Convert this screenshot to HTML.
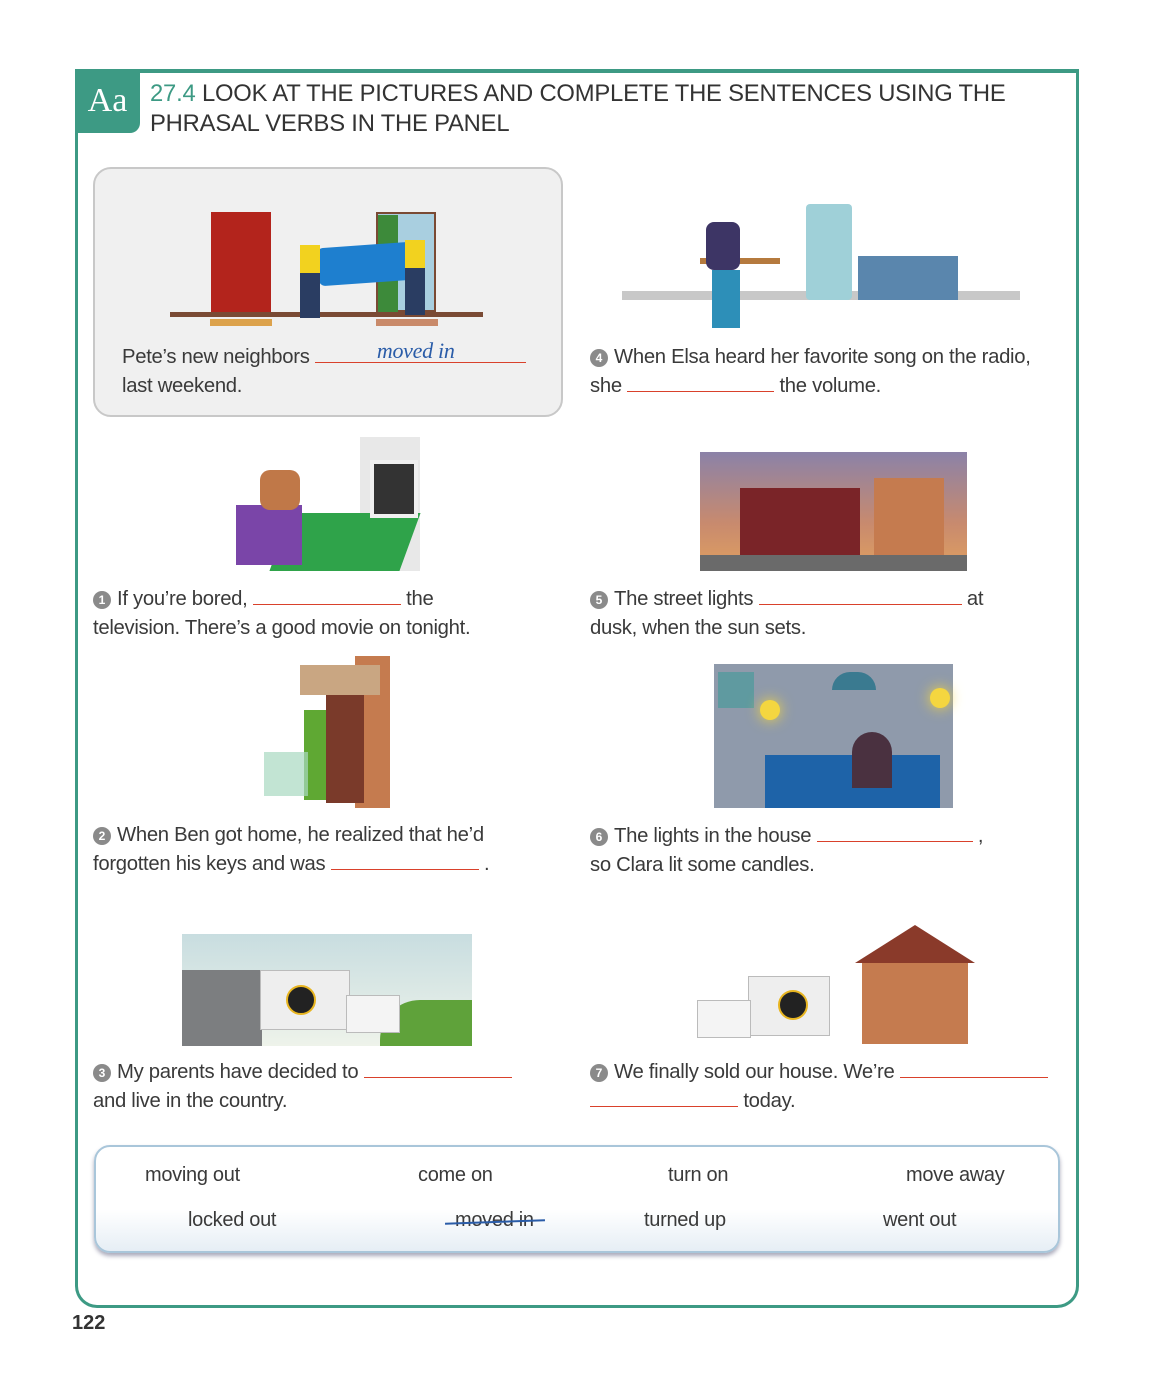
<!DOCTYPE html>
<html><head><meta charset="utf-8"><style>
body{margin:0;width:1152px;height:1376px;background:#fff;position:relative;font-family:"Liberation Sans",sans-serif;color:#333;overflow:hidden}
.a{position:absolute}
.t{position:absolute;font-size:20.3px;line-height:29px;color:#3a3a3a;letter-spacing:-0.3px;white-space:nowrap}
.bl{display:inline-block;border-bottom:1.5px solid #d9412b;height:18px;vertical-align:baseline}
.n{display:inline-block;width:18px;height:18px;border-radius:50%;background:#8a8a8a;color:#fff;font-size:12px;line-height:18px;text-align:center;font-weight:bold;vertical-align:1px;margin-right:6px;letter-spacing:0}
.w{position:absolute;font-size:20px;color:#3a3a3a;letter-spacing:-0.3px}
</style></head><body>
<div class="a" style="left:75px;top:69px;width:998px;height:1232px;border:3px solid #3d9a84;border-top-width:4px;border-radius:0 0 22px 22px"></div>
<div class="a" style="left:75px;top:69px;width:65px;height:64px;background:#3d9a84;border-radius:0 0 10px 0;color:#fff;font-family:'Liberation Serif',serif;font-size:34px;line-height:64px;text-align:center">Aa</div>
<div class="a" style="left:150px;top:79px;font-size:23.8px;line-height:30px;color:#333;letter-spacing:-0.2px;white-space:nowrap"><span style="color:#3d9a84">27.4</span> LOOK AT THE PICTURES AND COMPLETE THE SENTENCES USING THE<br>PHRASAL VERBS IN THE PANEL</div>

<div class="a" style="left:93px;top:167px;width:466px;height:246px;background:#f0f0f0;border:2px solid #c8c8c8;border-radius:18px"></div>
<!-- pic 0 -->
<div class="a" style="left:170px;top:312px;width:313px;height:5px;background:#7a4a34"></div>
<div class="a" style="left:211px;top:212px;width:60px;height:100px;background:#b3241c"></div>
<div class="a" style="left:376px;top:212px;width:60px;height:100px;background:#a9cfe0;border:2px solid #7a4a34;box-sizing:border-box"></div>
<div class="a" style="left:378px;top:215px;width:20px;height:97px;background:#3d8a3a"></div>
<div class="a" style="left:318px;top:245px;width:95px;height:38px;background:#1e7fcf;border-radius:6px;transform:rotate(-4deg)"></div>
<div class="a" style="left:300px;top:250px;width:20px;height:68px;background:#2a3d62"></div>
<div class="a" style="left:300px;top:245px;width:20px;height:28px;background:#f2d21f"></div>
<div class="a" style="left:405px;top:245px;width:20px;height:70px;background:#2a3d62"></div>
<div class="a" style="left:405px;top:240px;width:20px;height:28px;background:#f2d21f"></div>
<div class="a" style="left:210px;top:319px;width:62px;height:7px;background:#dca24c"></div>
<div class="a" style="left:376px;top:319px;width:62px;height:7px;background:#c98a6a"></div>
<div class="t" style="left:122px;top:343px">Pete’s new neighbors <span class="bl" style="width:211px;position:relative"><span style="position:absolute;left:62px;top:-8px;font-family:'Liberation Serif',serif;font-style:italic;color:#2a5ca8;font-size:22px">moved in</span></span><br>last weekend.</div>

<!-- pic 4 -->
<div class="a" style="left:622px;top:291px;width:398px;height:9px;background:#c8c8c8"></div>
<div class="a" style="left:806px;top:204px;width:46px;height:96px;background:#9fd0d8;border-radius:4px"></div>
<div class="a" style="left:858px;top:256px;width:100px;height:44px;background:#5a86ad"></div>
<div class="a" style="left:700px;top:258px;width:80px;height:6px;background:#b57a3e"></div>
<div class="a" style="left:706px;top:222px;width:34px;height:48px;background:#3d3565;border-radius:8px"></div>
<div class="a" style="left:712px;top:270px;width:28px;height:58px;background:#2d8fb8"></div>
<div class="t" style="left:590px;top:343px"><span class="n">4</span>When Elsa heard her favorite song on the radio,<br>she <span class="bl" style="width:147px"></span> the volume.</div>

<!-- pic 1 -->
<div class="a" style="left:360px;top:437px;width:60px;height:134px;background:#e8e8e8"></div>
<div class="a" style="left:280px;top:513px;width:130px;height:58px;background:#2fa34a;transform:skewX(-20deg)"></div>
<div class="a" style="left:236px;top:505px;width:66px;height:60px;background:#7a45a8"></div>
<div class="a" style="left:260px;top:470px;width:40px;height:40px;background:#c07848;border-radius:10px"></div>
<div class="a" style="left:370px;top:460px;width:40px;height:50px;background:#333;border:4px solid #f0f0f0"></div>
<div class="t" style="left:93px;top:585px"><span class="n">1</span>If you’re bored, <span class="bl" style="width:148px"></span> the<br>television. There’s a good movie on tonight.</div>

<!-- pic 5 -->
<div class="a" style="left:700px;top:452px;width:267px;height:119px;background:linear-gradient(#8b82a8,#c88a6e 60%,#e0a060)"></div>
<div class="a" style="left:740px;top:488px;width:120px;height:70px;background:#7a2428"></div>
<div class="a" style="left:874px;top:478px;width:70px;height:90px;background:#c57b4f"></div>
<div class="a" style="left:700px;top:555px;width:267px;height:16px;background:#6a6a6a"></div>
<div class="t" style="left:590px;top:585px"><span class="n">5</span>The street lights <span class="bl" style="width:203px"></span> at<br>dusk, when the sun sets.</div>

<!-- pic 2 -->
<div class="a" style="left:355px;top:656px;width:35px;height:152px;background:#c57b4f"></div>
<div class="a" style="left:300px;top:665px;width:80px;height:30px;background:#c9a682"></div>
<div class="a" style="left:326px;top:695px;width:38px;height:108px;background:#7a3a2a"></div>
<div class="a" style="left:304px;top:710px;width:22px;height:90px;background:#5fa833"></div>
<div class="a" style="left:264px;top:752px;width:44px;height:44px;background:#a8d8c0;opacity:.7"></div>
<div class="t" style="left:93px;top:821px"><span class="n">2</span>When Ben got home, he realized that he’d<br>forgotten his keys and was <span class="bl" style="width:148px"></span> .</div>

<!-- pic 6 -->
<div class="a" style="left:714px;top:664px;width:239px;height:144px;background:#8f9aab"></div>
<div class="a" style="left:765px;top:755px;width:175px;height:53px;background:#1e63a8"></div>
<div class="a" style="left:718px;top:672px;width:36px;height:36px;background:#5f9aa0"></div>
<div class="a" style="left:832px;top:672px;width:44px;height:18px;background:#3a7a90;border-radius:20px 20px 0 0"></div>
<div class="a" style="left:852px;top:732px;width:40px;height:56px;background:#4a3140;border-radius:20px 20px 0 0"></div>
<div class="a" style="left:760px;top:700px;width:20px;height:20px;background:#f4d640;border-radius:50%;box-shadow:0 0 14px #f4d640"></div>
<div class="a" style="left:930px;top:688px;width:20px;height:20px;background:#f4d640;border-radius:50%;box-shadow:0 0 14px #f4d640"></div>
<div class="t" style="left:590px;top:822px"><span class="n">6</span>The lights in the house <span class="bl" style="width:156px"></span> ,<br>so Clara lit some candles.</div>

<!-- pic 3 -->
<div class="a" style="left:182px;top:934px;width:290px;height:112px;background:linear-gradient(#c8dde0,#eef3ea)"></div>
<div class="a" style="left:182px;top:970px;width:80px;height:76px;background:#7c7e80"></div>
<div class="a" style="left:380px;top:1000px;width:92px;height:46px;background:#5fa23a;border-radius:40px 0 0 0"></div>
<div class="a" style="left:260px;top:970px;width:88px;height:58px;background:#eee;border:1px solid #bbb"></div>
<div class="a" style="left:286px;top:985px;width:26px;height:26px;background:#222;border-radius:50%;border:2px solid #e8b520"></div>
<div class="a" style="left:346px;top:995px;width:52px;height:36px;background:#f4f4f4;border:1px solid #bbb"></div>
<div class="t" style="left:93px;top:1058px"><span class="n">3</span>My parents have decided to <span class="bl" style="width:148px"></span><br>and live in the country.</div>

<!-- pic 7 -->
<div class="a" style="left:862px;top:960px;width:106px;height:84px;background:#c57b4f"></div>
<div class="a" style="left:855px;top:925px;width:0;height:0;border-left:60px solid transparent;border-right:60px solid transparent;border-bottom:38px solid #8a3a2a"></div>
<div class="a" style="left:748px;top:976px;width:80px;height:58px;background:#eee;border:1px solid #bbb"></div>
<div class="a" style="left:778px;top:990px;width:26px;height:26px;background:#222;border-radius:50%;border:2px solid #e8b520"></div>
<div class="a" style="left:697px;top:1000px;width:52px;height:36px;background:#f4f4f4;border:1px solid #bbb"></div>
<div class="t" style="left:590px;top:1058px"><span class="n">7</span>We finally sold our house. We’re <span class="bl" style="width:148px"></span><br><span class="bl" style="width:148px"></span> today.</div>

<!-- panel -->
<div class="a" style="left:94px;top:1145px;width:962px;height:104px;border:2px solid #a9c6da;border-radius:16px;background:linear-gradient(#fff 60%,#e6eef5);box-shadow:0 3px 4px #aab"></div>
<div class="w" style="left:145px;top:1164px">moving out</div>
<div class="w" style="left:418px;top:1164px">come on</div>
<div class="w" style="left:668px;top:1164px">turn on</div>
<div class="w" style="left:906px;top:1164px">move away</div>
<div class="w" style="left:188px;top:1209px">locked out</div>
<div class="w" style="left:455px;top:1209px">moved in</div>
<div class="a" style="left:445px;top:1221px;width:100px;height:2px;background:#2a5ca8;transform:rotate(-2deg)"></div>
<div class="w" style="left:644px;top:1209px">turned up</div>
<div class="w" style="left:883px;top:1209px">went out</div>
<div class="a" style="left:72px;top:1312px;font-size:20px;font-weight:bold;color:#333">122</div>
</body></html>
